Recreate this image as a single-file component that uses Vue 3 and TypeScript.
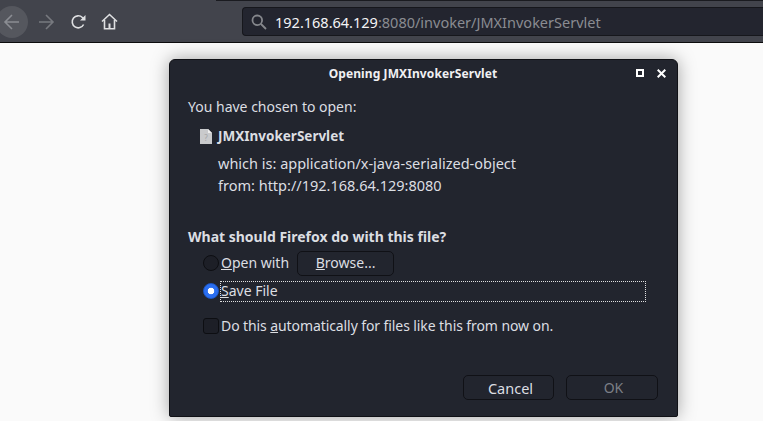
<template>
  <div class="screen">
    <div class="topline"></div>
    <header class="toolbar">
      <div class="nav">
        <span class="back-circle">
          <svg width="18" height="18" viewBox="0 0 18 18" fill="none" stroke="#8b8d93" stroke-width="1.6">
            <path d="M16 9H2M9 2 2 9l7 7" />
          </svg>
        </span>
        <svg class="forward" width="18" height="18" viewBox="0 0 18 18" fill="none" stroke="#77797f" stroke-width="1.6">
          <path d="M2 9h14M9 2l7 7-7 7" />
        </svg>
        <svg class="reload" width="16" height="16" viewBox="0 0 16 16" fill="none" stroke="#dfe0e2" stroke-width="1.6">
          <path d="M13.6 10.500A6 6 0 1 1 12.400 3.500L14.500 5.600" />
          <path d="M15.500 1v5.500H10z" fill="#dfe0e2" stroke="none" />
        </svg>
        <svg class="home" width="17" height="17" viewBox="0 0 17 17" fill="none" stroke="#dfe0e2" stroke-width="1.6">
          <path d="M1 8.500 8.500 1.500 16 8.500" />
          <path d="M3.500 7v8.700h10V7" />
          <rect x="7.500" y="10.500" width="2" height="5" fill="#dfe0e2" stroke="none" />
        </svg>
      </div>
      <div class="urlbar">
        <svg width="16" height="16" viewBox="0 0 16 16" fill="none" stroke="#85878c" stroke-width="1.8">
          <circle cx="6.300" cy="6.300" r="4.800" />
          <path d="m10 10 5 5" />
        </svg>
        <span class="url"><span class="host">192.168.64.129</span>:8080/invoker/JMXInvokerServlet</span>
      </div>
    </header>

    <section class="dialog">
      <div class="titlebar">
        <span class="title">Opening JMXInvokerServlet</span>
        <span class="win-max"></span>
        <svg class="win-close" width="9" height="9" viewBox="0 0 9 9" stroke="#fff" stroke-width="2">
          <path d="m.7.7 7.600 7.600M8.300.7.7 8.300" />
        </svg>
      </div>
      <div class="body">
        <p class="chosen">You have chosen to open:</p>
        <div class="file">
          <svg width="12" height="15" viewBox="0 0 12 15">
            <path d="M0 0h8l4 4v11H0z" fill="#c9cacc" />
            <path d="M8 0l4 4H8z" fill="#eeeeee" />
            <text x="6" y="12" text-anchor="middle" font-size="8" fill="#a3a4a7">?</text>
          </svg>
          <strong>JMXInvokerServlet</strong>
        </div>
        <div class="meta">
          <div>which is: application/x-java-serialized-object</div>
          <div>from: http://192.168.64.129:8080</div>
        </div>
        <div class="question">What should Firefox do with this file?</div>
        <div class="choice first">
          <span class="radio"></span>
          <span class="label"><u>O</u>pen with</span>
          <button class="btn browse"><u>B</u>rowse...</button>
        </div>
        <div class="choice focused">
          <span class="radio on"></span>
          <span class="label focus-ring"><u>S</u>ave File</span>
        </div>
        <div class="choice auto">
          <span class="check"></span>
          <span class="label auto-label">Do this <u>a</u>utomatically for files like this from now on.</span>
        </div>
        <div class="actions">
          <button class="btn cancel">Cancel</button>
          <button class="btn ok">OK</button>
        </div>
      </div>
    </section>
  </div>
</template>

<script setup lang="ts">
</script>

<style>
html, body {
  margin: 0;
  background: #fafafa;
}
</style>

<style scoped>
.screen {
  position: relative;
  width: 763px;
  height: 421px;
  overflow: hidden;
  background: #fafafa;
  font-family: "Noto Sans", "Open Sans", sans-serif;
}

.topline {
  height: 1px;
  background: linear-gradient(to right, #42444c 216px, #1a1b20 216px);
}

.toolbar {
  display: flex;
  align-items: center;
  height: 41px;
  background: #42444c;
  border-bottom: 1px solid #0c0c0d;
}

.nav {
  display: flex;
  align-items: center;
  width: 242px;
  flex: none;
}

.back-circle {
  display: flex;
  align-items: center;
  justify-content: center;
  width: 32px;
  height: 32px;
  margin-left: -4px;
  border-radius: 50%;
  background: #55575e;
}

.forward {
  margin-left: 9px;
}

.reload {
  margin-left: 15px;
}

.home {
  margin-left: 15px;
}

.urlbar {
  display: flex;
  align-items: center;
  gap: 8px;
  width: 521px;
  height: 29px;
  padding-left: 8px;
  box-sizing: border-box;
  background: #23252f;
  border: 1px solid #16171c;
  border-right: 0;
  border-radius: 4px 0 0 4px;
}

.url {
  font-size: 14.5px;
  color: #8a8c92;
  white-space: nowrap;
}

.host {
  color: #f4f4f6;
}

.dialog {
  position: absolute;
  left: 169px;
  top: 59px;
  width: 509px;
  height: 358px;
  box-sizing: border-box;
  border: 1px solid #101116;
  border-radius: 6px 6px 2px 2px;
  background: #22252e;
  color: #dcdee2;
  box-shadow: 0 0 18px rgba(0, 0, 0, 0.35);
}

.titlebar {
  position: relative;
  height: 25px;
  padding-right: 21px;
  text-align: center;
  line-height: 25px;
}

.title {
  font-size: 12px;
  font-weight: 700;
  letter-spacing: 0.1px;
  color: #f0f0f2;
}

.win-max {
  position: absolute;
  left: 466px;
  top: 9px;
  width: 4px;
  height: 4px;
  border: 2px solid #fff;
}

.win-close {
  position: absolute;
  left: 487px;
  top: 9px;
}

.body {
  padding: 12px 18px 0;
  font-size: 14px;
  line-height: 20px;
}

.chosen {
  margin: 0;
}

.file {
  display: flex;
  align-items: center;
  gap: 6px;
  margin: 9px 0 0 12px;
  font-size: 13.5px;
}

.meta {
  margin: 6px 0 0 30px;
  font-size: 14.5px;
  line-height: 22px;
}

.question {
  margin-top: 31px;
  font-weight: 700;
}

.choice {
  display: flex;
  align-items: center;
  margin-left: 15px;
}

.first {
  margin-top: 3px;
  height: 26px;
}

.focused {
  margin-top: 5px;
  height: 20px;
}

.auto {
  margin-top: 15px;
  height: 20px;
}

.radio {
  flex: none;
  width: 14px;
  height: 14px;
  border: 1px solid #0d0e12;
  border-radius: 50%;
  background: #1d1f27;
}

.radio.on {
  background: radial-gradient(circle, #fff 0 3px, #2a6ef0 3.6px);
  border-color: #1c56c4;
}

.check {
  flex: none;
  width: 14px;
  height: 14px;
  border: 1px solid #0d0e12;
  border-radius: 3px;
  background: #1d1f27;
}

.label {
  margin-left: 2px;
}

.auto-label {
  letter-spacing: -0.09px;
}

.focus-ring {
  flex: 1;
  margin-right: 14px;
  height: 19px;
  line-height: 18px;
  outline: 1px dotted #e0e0e0;
}

.btn {
  font: inherit;
  color: #dcdee2;
  background: #22252e;
  border: 1px solid #101116;
  border-radius: 5px;
  padding: 0;
}

.browse {
  width: 97px;
  height: 25px;
  margin-left: 8px;
}

.actions {
  position: absolute;
  right: 19px;
  bottom: 16px;
  display: flex;
  gap: 12px;
}

.cancel {
  width: 91px;
  height: 25px;
  padding-left: 4px;
  font-size: 14.5px;
}

.ok {
  width: 92px;
  height: 25px;
  padding-left: 3px;
  color: #7c7f86;
}
</style>
